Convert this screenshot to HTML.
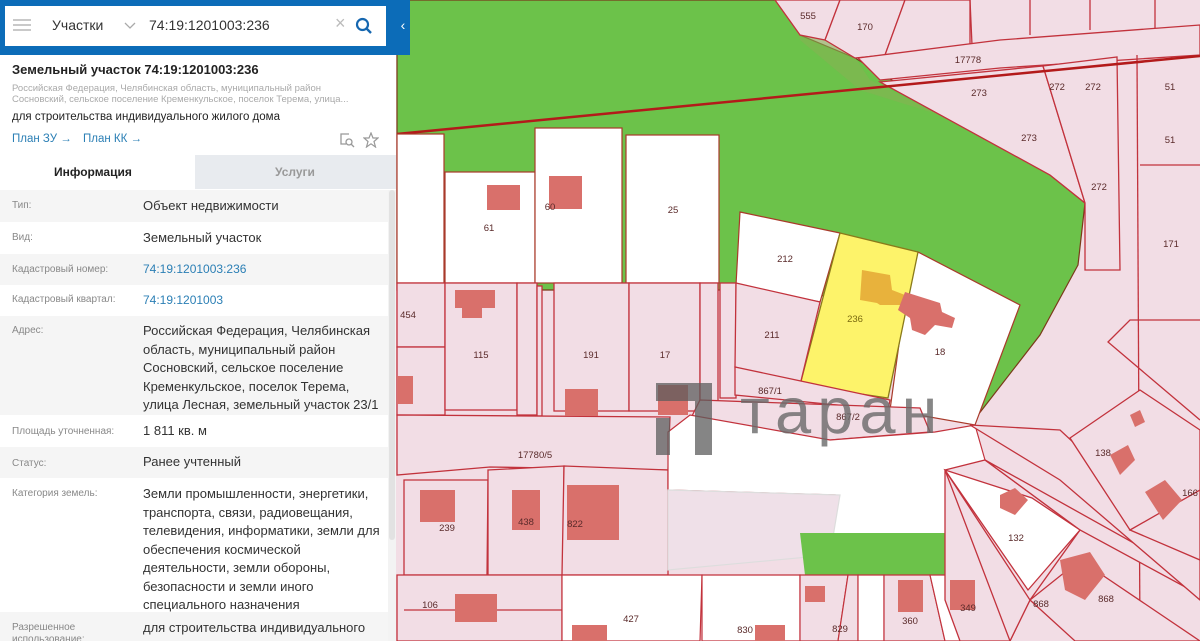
<!DOCTYPE html>
<html><head><meta charset="utf-8">
<style>
*{margin:0;padding:0;box-sizing:border-box}
body{width:1200px;height:641px;overflow:hidden;position:relative;font-family:"Liberation Sans",sans-serif;background:#f2dde5}
#map{position:absolute;left:0;top:0}
#panel{position:absolute;left:0;top:0;width:396px;height:641px;background:#fff;overflow:hidden}
.hdr{position:absolute;left:0;top:0;width:396px;height:55px;background:#0c6cb8}
.tab{position:absolute;left:396px;top:0;width:14px;height:55px;background:#0c6cb8;color:#fff;font-size:14px;line-height:50px;text-align:center}
.box{position:absolute;left:5px;top:6px;width:381px;height:40px;background:#fff}
.t{position:absolute;white-space:nowrap}
.row{position:absolute;left:0;width:388px}
.row.g{background:#f5f5f5}
.lab{position:absolute;left:12px;font-size:10px;color:#888}
.val{position:absolute;left:143px;font-size:13px;color:#333;line-height:18.5px;width:245px}
.lnk{color:#2b7fb5}
</style></head><body>
<svg id="map" width="1200" height="641" viewBox="0 0 1200 641" font-family="Liberation Sans" font-size="10" fill="none">
<rect width="1200" height="641" fill="#f2dde5"/>
<polygon points="397,0 790,0 800,35 855,58 1050,175 1085,203 1078,265 1040,335 978,415 900,300 720,290 397,290" fill="#6cc24a" stroke="#7a3a1a" stroke-width="1.2"/>
<polygon points="790,0 830,20 870,80 940,115 860,90 800,40" fill="#86b253" opacity=".6"/>
<g stroke="#c2323c" stroke-width="1.3">
<polygon points="775,0 840,0 825,40 800,35" fill="#f2dde5"/>
<polygon points="840,0 905,0 885,55 855,58 825,40" fill="#f2dde5"/>
<polygon points="905,0 970,0 970,45 885,55" fill="#f2dde5"/>
<line x1="970" y1="0" x2="972" y2="45"/><line x1="1030" y1="0" x2="1030" y2="35"/><line x1="1090" y1="0" x2="1090" y2="30"/><line x1="1155" y1="0" x2="1155" y2="28"/>
<polygon points="858,58 1000,40 1200,25 1200,55 1000,68 880,80" fill="#f2dde5"/>
<polygon points="880,82 1043,66 1085,203 1050,175" fill="#f2dde5"/>
<polygon points="1043,66 1117,57 1120,270 1085,270 1085,203" fill="#f2dde5"/>
<line x1="1137" y1="55" x2="1140" y2="641"/>
<line x1="1140" y1="165" x2="1200" y2="165"/>
<polyline points="1200,320 1130,320 1108,342 1200,420"/>
</g>
<line x1="397" y1="134" x2="1200" y2="56" stroke="#b31a1a" stroke-width="2.5"/>
<g stroke="#a83a2a" stroke-width="1.2" fill="#fff">
<rect x="397" y="134" width="47" height="149"/>
<rect x="445" y="172" width="90" height="111"/>
<rect x="535" y="128" width="87" height="155"/>
<rect x="626" y="135" width="93" height="148"/>
<polygon points="740,212 840,233 820,302 736,285"/>
<polygon points="918,252 1020,305 975,425 890,410 905,300"/>
</g>
<polygon points="840,233 918,252 888,398 800,385" fill="#fdf36a" stroke="#8a7a1a" stroke-width="1.3"/>
<polygon points="862,270 890,275 892,290 905,295 902,305 880,305 877,303 860,300" fill="#e8b23c"/>
<polygon points="905,292 940,303 942,312 955,318 952,328 935,325 925,335 912,330 910,318 898,310" fill="#d9706b"/>
<g stroke="#c2323c" stroke-width="1.3" fill="#f2dde5">
<rect x="397" y="283" width="48" height="64"/><rect x="397" y="347" width="48" height="68"/>
<rect x="445" y="283" width="72" height="127"/>
<rect x="517" y="283" width="20" height="132"/>
<rect x="537" y="286" width="5" height="130"/>
<rect x="554" y="283" width="75" height="128"/>
<rect x="629" y="283" width="71" height="128"/>
<rect x="700" y="283" width="18" height="118"/>
<rect x="720" y="283" width="16" height="115"/>
<polygon points="736,283 820,302 800,385 735,367"/>
<polygon points="735,367 890,400 888,410 735,395"/>
<polygon points="700,400 920,408 930,432 830,440 690,420"/>
<polygon points="397,415 670,417 668,470 490,467 397,475"/>
<polygon points="404,480 488,480 487,575 404,575"/>
<polygon points="488,470 564,466 563,575 488,575"/>
<polygon points="564,466 668,470 668,575 562,575"/>
<polygon points="397,575 562,575 562,641 397,641"/>
<polygon points="404,610 562,610"/>
</g>
<g stroke="#c2323c" stroke-width="1.2">
<polygon points="668,432 690,415 830,440 935,432 975,425 985,460 945,535 830,535 835,495 668,490" fill="#fff"/>
<polygon points="668,490 840,495 830,555 668,570" fill="#efe0e8" stroke="#ddd"/>
<polygon points="800,533 975,533 975,575 805,575" fill="#6cc24a" stroke="none"/>
<polygon points="670,575 702,575 702,590" fill="#6cc24a" stroke="none"/>
<polygon points="562,575 702,575 700,641 562,641" fill="#fff"/>
<polygon points="702,575 800,575 800,641 702,641" fill="#fff"/>
<polygon points="800,575 848,575 838,641 800,641" fill="#f2dde5"/>
<polygon points="848,575 858,575 858,641 838,641" fill="#f2dde5"/>
<polygon points="858,575 884,575 884,641 858,641" fill="#fff"/>
<polygon points="884,575 930,575 945,641 884,641" fill="#f2dde5"/>
<polygon points="930,575 975,575 1000,641 945,641" fill="#fff"/>
</g>
<g stroke="#c2323c" stroke-width="1.3" fill="#f2dde5">
<polygon points="945,470 985,460 1080,530 1030,600 1010,641 960,641 945,600"/>
<polygon points="985,460 1080,530 1200,595 1200,580"/>
<polygon points="970,425 1060,430 1200,560 1200,600 1060,480"/>
<polygon points="1070,438 1140,390 1200,430 1200,500 1130,530"/>
<polygon points="1130,530 1200,490 1200,560"/>
<polygon points="1030,600 1080,560 1200,641 1075,641"/>
<polygon points="945,470 1030,600 1010,641"/>
</g>
<polygon points="945,470 1032,498 1080,530 1028,590" fill="#fff" stroke="#c2323c" stroke-width="1.3"/>
<g fill="#d9706b">
<rect x="487" y="185" width="33" height="25"/><rect x="549" y="176" width="33" height="33"/>
<rect x="455" y="290" width="40" height="18"/><rect x="462" y="300" width="20" height="18"/>
<rect x="397" y="376" width="16" height="28"/><rect x="565" y="389" width="33" height="27"/>
<rect x="658" y="385" width="30" height="30"/>
<rect x="420" y="490" width="35" height="32"/><rect x="512" y="490" width="28" height="40"/>
<rect x="567" y="485" width="52" height="55"/><rect x="455" y="594" width="42" height="28"/>
<rect x="572" y="625" width="35" height="16"/><rect x="755" y="625" width="30" height="16"/>
<rect x="805" y="586" width="20" height="16"/><rect x="898" y="580" width="25" height="32"/>
<rect x="950" y="580" width="25" height="30"/>
<polygon points="1000,495 1015,488 1028,500 1015,515 1000,508"/>
<polygon points="1110,455 1128,445 1135,460 1120,475"/>
<polygon points="1130,415 1140,410 1145,422 1135,427"/>
<polygon points="1145,492 1165,480 1182,500 1163,520"/>
<polygon points="1060,560 1090,552 1105,575 1085,600 1065,590"/>
</g>
<g fill="#5a2a2a" font-size="9.5" text-anchor="middle">
<text x="808" y="19">555</text><text x="865" y="30">170</text><text x="968" y="63">17778</text>
<text x="979" y="96">273</text><text x="1029" y="141">273</text><text x="1057" y="90">272</text><text x="1093" y="90">272</text><text x="1099" y="190">272</text>
<text x="1170" y="90">51</text><text x="1170" y="143">51</text><text x="1171" y="247">171</text>
<text x="489" y="231">61</text><text x="550" y="210">60</text><text x="673" y="213">25</text>
<text x="785" y="262">212</text><text x="855" y="322" fill="#7a6a10">236</text><text x="940" y="355">18</text>
<text x="772" y="338">211</text><text x="408" y="318">454</text><text x="481" y="358">115</text>
<text x="591" y="358">191</text><text x="665" y="358">17</text><text x="770" y="394">867/1</text><text x="535" y="458">17780/5</text>
<text x="447" y="531">239</text><text x="526" y="525">438</text><text x="575" y="527">822</text>
<text x="430" y="608">106</text><text x="631" y="622">427</text><text x="745" y="633">830</text>
<text x="840" y="632">829</text><text x="910" y="624">360</text><text x="968" y="611">349</text>
<text x="1016" y="541">132</text><text x="1041" y="607">868</text><text x="1106" y="602">868</text>
<text x="1103" y="456">138</text><text x="1190" y="496">166</text><text x="848" y="420">867/2</text>
</g>
<g fill="#5d5d5d" opacity=".75">
<rect x="656" y="383" width="56" height="18"/><rect x="656" y="418" width="14" height="37"/><rect x="695" y="401" width="17" height="54"/>
</g>
<text x="740" y="433" font-size="65" fill="#6a6a6a" opacity=".8" font-family="Liberation Sans" letter-spacing="6">таран</text>
</svg>

<div id="panel">
<div class="hdr"></div>
<div class="box">
  <div style="position:absolute;left:8px;top:13px;width:18px;height:2px;background:#c9c9c9;box-shadow:0 5px 0 #c9c9c9,0 10px 0 #c9c9c9"></div>
  <div class="t" style="left:47px;top:11px;font-size:14px;color:#333">Участки</div>
  <svg style="position:absolute;left:119px;top:16px" width="12" height="8"><polyline points="1,1 6,6 11,1" stroke="#aaa" stroke-width="1.3" fill="none"/></svg>
  <div class="t" style="left:144px;top:11px;font-size:14px;color:#333">74:19:1201003:236</div>
  <div class="t" style="left:330px;top:7px;font-size:18px;color:#bbb">×</div>
  <svg style="position:absolute;left:350px;top:11px" width="18" height="18"><circle cx="7.5" cy="7.5" r="5.5" stroke="#1667b0" stroke-width="2.2" fill="none"/><line x1="11.5" y1="11.5" x2="16" y2="16" stroke="#1667b0" stroke-width="2.4"/></svg>
</div>
<div class="t" style="left:12px;top:62px;font-size:13px;font-weight:bold;color:#222">Земельный участок 74:19:1201003:236</div>
<div class="t" style="left:12px;top:83px;font-size:9.5px;color:#aaa">Российская Федерация, Челябинская область, муниципальный район</div>
<div class="t" style="left:12px;top:94px;font-size:9.5px;color:#aaa">Сосновский, сельское поселение Кременкульское, поселок Терема, улица...</div>
<div class="t" style="left:12px;top:111px;font-size:11.5px;color:#222">для строительства индивидуального жилого дома</div>
<div class="t lnk" style="left:12px;top:133px;font-size:11.5px">План ЗУ →</div>
<div class="t lnk" style="left:83px;top:133px;font-size:11.5px">План КК →</div>
<svg style="position:absolute;left:339px;top:132px" width="16" height="16"><path d="M10 2H2v10h5" stroke="#999" stroke-width="1.3" fill="none"/><circle cx="10" cy="10" r="3" stroke="#999" stroke-width="1.3" fill="none"/><line x1="12" y1="12" x2="15" y2="15" stroke="#999" stroke-width="1.3"/></svg>
<svg style="position:absolute;left:363px;top:132px" width="16" height="16"><polygon points="8,1 10,6 15,6 11,9.5 12.5,15 8,11.8 3.5,15 5,9.5 1,6 6,6" stroke="#999" stroke-width="1.2" fill="none"/></svg>
<div style="position:absolute;left:0;top:155px;width:195px;height:34px;background:#fff"></div>
<div style="position:absolute;left:195px;top:155px;width:201px;height:34px;background:#e8ebef"></div>
<div class="t" style="left:54px;top:165px;font-size:12px;font-weight:bold;color:#222">Информация</div>
<div class="t" style="left:275px;top:165px;font-size:12px;font-weight:bold;color:#999">Услуги</div>

<div class="row g" style="top:190px;height:32px"><div class="lab" style="top:10px">Тип:</div><div class="val" style="top:7px">Объект недвижимости</div></div>
<div class="row" style="top:222px;height:32px"><div class="lab" style="top:10px">Вид:</div><div class="val" style="top:7px">Земельный участок</div></div>
<div class="row g" style="top:254px;height:31px"><div class="lab" style="top:10px">Кадастровый номер:</div><div class="val lnk" style="top:6px;font-size:12px;color:#2b7fb5">74:19:1201003:236</div></div>
<div class="row" style="top:285px;height:31px"><div class="lab" style="top:9px">Кадастровый квартал:</div><div class="val lnk" style="top:6px;font-size:12px;color:#2b7fb5">74:19:1201003</div></div>
<div class="row g" style="top:316px;height:99px"><div class="lab" style="top:9px">Адрес:</div><div class="val" style="top:6px">Российская Федерация, Челябинская область, муниципальный район Сосновский, сельское поселение Кременкульское, поселок Терема, улица Лесная, земельный участок 23/1</div></div>
<div class="row" style="top:415px;height:32px"><div class="lab" style="top:11px">Площадь уточненная:</div><div class="val" style="top:7px">1 811 кв. м</div></div>
<div class="row g" style="top:447px;height:31px"><div class="lab" style="top:11px">Статус:</div><div class="val" style="top:6px">Ранее учтенный</div></div>
<div class="row" style="top:478px;height:134px"><div class="lab" style="top:10px">Категория земель:</div><div class="val" style="top:7px">Земли промышленности, энергетики, транспорта, связи, радиовещания, телевидения, информатики, земли для обеспечения космической деятельности, земли обороны, безопасности и земли иного специального назначения</div></div>
<div class="row g" style="top:612px;height:40px"><div class="lab" style="top:10px;line-height:12px">Разрешенное<br>использование:</div><div class="val" style="top:7px">для строительства индивидуального</div></div>
<div style="position:absolute;left:388px;top:190px;width:8px;height:451px;background:#f3f3f3"></div>
<div style="position:absolute;left:389px;top:190px;width:6px;height:350px;background:#e2e2e2;border-radius:3px"></div>
</div>
<div class="tab">‹</div>
</body></html>
